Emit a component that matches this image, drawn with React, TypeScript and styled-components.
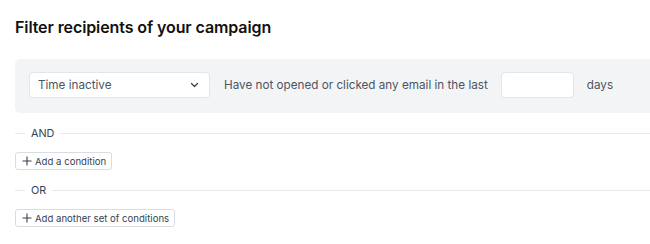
import React from "react";
import styled, { createGlobalStyle } from "styled-components";

const Global = createGlobalStyle`
  html, body { margin: 0; padding: 0; background: #ffffff; overflow: hidden; }
  body { font-family: Inter, "Noto Sans", sans-serif; color: #1f2937; }
  * { box-sizing: border-box; }
`;

const Page = styled.div`
  width: 720px;
  padding: 16px 0 0 15px;
  display: flex;
  flex-direction: column;
`;

const Title = styled.h1`
  margin: 0;
  font-size: 16px;
  line-height: 22px;
  font-weight: 600;
  color: #111111;
  letter-spacing: -0.1px;
`;

const Panel = styled.div`
  margin-top: 21px;
  background: #f3f4f6;
  border-radius: 5px;
  padding: 13px 14px 15px;
  display: flex;
  align-items: center;
  gap: 14px;
`;

const Select = styled.div`
  width: 181px;
  height: 26px;
  background: #ffffff;
  border: 1px solid #e3e5e8;
  border-radius: 4px;
  padding: 0 10px 0 8px;
  display: flex;
  align-items: center;
  justify-content: space-between;
  font-size: 11.7px;
  color: #4b5563;
`;

const Label = styled.span`
  font-size: 11.7px;
  color: #4b5563;
  white-space: nowrap;
`;

const NumberInput = styled.div`
  width: 73px;
  height: 26px;
  background: #ffffff;
  border: 1px solid #e3e5e8;
  border-radius: 4px;
  margin: 0 -1px;
`;

const Divider = styled.div<{ $top: number }>`
  margin-top: ${(p) => p.$top}px;
  display: flex;
  align-items: center;
  gap: 6px;
  height: 16px;
  font-size: 10.8px;
  color: #374151;

  &::before {
    content: "";
    width: 10px;
    height: 1px;
    background: #e8e9ec;
  }
  &::after {
    content: "";
    flex: 1;
    height: 1px;
    background: #e8e9ec;
  }
`;

const AddButton = styled.button<{ $top: number }>`
  margin-top: ${(p) => p.$top}px;
  align-self: flex-start;
  height: 18px;
  padding: 0 5px 0 6px;
  display: inline-flex;
  align-items: center;
  gap: 3px;
  background: #ffffff;
  border: 1px solid #d9dce0;
  border-radius: 3px;
  font-family: Inter, "Noto Sans", sans-serif;
  font-size: 9.6px;
  color: #374151;
  cursor: pointer;
`;

const Chevron = () => (
  <svg width="9" height="6" viewBox="0 0 9 6" fill="none">
    <path d="M1.5 1.5 L4.5 4.5 L7.5 1.5" stroke="#374151" strokeWidth="1.3" strokeLinecap="round" strokeLinejoin="round" />
  </svg>
);

const Plus = () => (
  <svg width="10" height="10" viewBox="0 0 10 10" fill="none">
    <path d="M5 0.5 V9.5 M0.5 5 H9.5" stroke="#374151" strokeWidth="1.1" />
  </svg>
);

export default function App() {
  return (
    <>
      <Global />
      <Page>
        <Title>Filter recipients of your campaign</Title>
        <Panel>
          <Select>
            <span>Time inactive</span>
            <Chevron />
          </Select>
          <Label>Have not opened or clicked any email in the last</Label>
          <NumberInput />
          <Label>days</Label>
        </Panel>
        <Divider $top={12}>AND</Divider>
        <AddButton $top={11}>
          <Plus />
          Add a condition
        </AddButton>
        <Divider $top={12}>OR</Divider>
        <AddButton $top={11}>
          <Plus />
          Add another set of conditions
        </AddButton>
      </Page>
    </>
  );
}
